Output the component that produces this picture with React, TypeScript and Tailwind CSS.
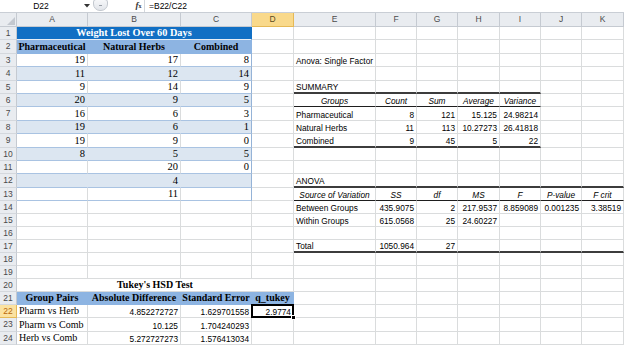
import React from 'react';

type Spec = {
  t?: string;
  a?: 'l' | 'c' | 'r';
  f?: string;
  bg?: string;
  rc?: string;
  bc?: string;
  bw?: string;
  sel?: boolean;
};

type Placed = { w: string; s: Spec };

const COLS = ['A', 'B', 'C', 'D', 'E', 'F', 'G', 'H', 'I', 'J', 'K'];
const W = ['w-[71px]', 'w-[93px]', 'w-[71px]', 'w-[42px]', 'w-[82px]', 'w-[41px]', 'w-[41px]', 'w-[42px]', 'w-[41px]', 'w-[41px]', 'w-[42px]'];
const RH = [
  'h-[13px]', 'h-[14px]', 'h-[13px]', 'h-[14px]', 'h-[13px]', 'h-[13px]', 'h-[14px]', 'h-[13px]', 'h-[14px]', 'h-[13px]', 'h-[13px]', 'h-[14px]', 'h-[13px]',
  'h-[13px]', 'h-[13px]', 'h-[13px]', 'h-[13px]', 'h-[13px]', 'h-[13px]', 'h-[13px]', 'h-[13px]', 'h-[13px]', 'h-[14px]', 'h-[13px]',
];

const serifN = "font-['Liberation_Serif',serif] text-[10.5px] text-black";
const serif = "font-['Liberation_Serif',serif] text-[10px] text-black";
const serifB = "font-['Liberation_Serif',serif] text-[10px] font-bold text-black";
const serifBW = "font-['Liberation_Serif',serif] text-[10.3px] font-bold text-white";
const sans = "font-['Liberation_Sans',Arial,sans-serif] text-[8.3px] text-black";
const sansI = "font-['Liberation_Sans',Arial,sans-serif] text-[8.3px] italic text-black";

const leftData: Record<number, string[]> = {
  3: ['19', '17', '8'],
  4: ['11', '12', '14'],
  5: ['9', '14', '9'],
  6: ['20', '9', '5'],
  7: ['16', '6', '3'],
  8: ['19', '6', '1'],
  9: ['19', '9', '0'],
  10: ['8', '5', '5'],
  11: ['', '20', '0'],
  12: ['', '4', ''],
  13: ['', '11', ''],
};

const rightData: Record<number, string[]> = {
  3: ['Anova: Single Factor'],
  5: ['SUMMARY'],
  6: ['Groups', 'Count', 'Sum', 'Average', 'Variance'],
  7: ['Pharmaceutical', '8', '121', '15.125', '24.98214'],
  8: ['Natural Herbs', '11', '113', '10.27273', '26.41818'],
  9: ['Combined', '9', '45', '5', '22'],
  12: ['ANOVA'],
  13: ['Source of Variation', 'SS', 'df', 'MS', 'F', 'P-value', 'F crit'],
  14: ['Between Groups', '435.9075', '2', '217.9537', '8.859089', '0.001235', '3.38519'],
  15: ['Within Groups', '615.0568', '25', '24.60227'],
  17: ['Total', '1050.964', '27'],
};

const tukey: Record<number, string[]> = {
  22: ['Pharm vs Herb', '4.852272727', '1.629701558', '2.9774'],
  23: ['Pharm vs Comb', '10.125', '1.704240293', ''],
  24: ['Herb vs Comb', '5.272727273', '1.576413034', ''],
};

function buildRow(r: number): Placed[] {
  const out: Placed[] = [];
  if (r === 1) {
    out.push({ w: 'w-[235px]', s: { t: 'Weight Lost Over 60 Days', a: 'c', f: serifBW, bg: 'bg-[#116fc4]', rc: 'border-r-[#116fc4]', bc: 'border-b-[#e8eef6]' } });
    out.push({ w: W[3], s: {} });
  } else if (r === 2) {
    ['Pharmaceutical', 'Natural Herbs', 'Combined'].forEach((t, i) => {
      out.push({ w: W[i], s: { t, a: 'c', f: serifB, bg: 'bg-[#8db4e2]', rc: 'border-r-[#8db4e2]', bc: 'border-b-[#8db4e2]' } });
    });
    out.push({ w: W[3], s: {} });
  } else if (r >= 3 && r <= 13) {
    const band = r % 2 === 0;
    leftData[r].forEach((t, i) => {
      out.push({
        w: W[i],
        s: {
          t,
          a: 'r',
          f: serifN,
          bg: band ? 'bg-[#dce6f1]' : '',
          rc: i === 2 ? 'border-r-[#95b3d7]' : band ? 'border-r-[#dce6f1]' : 'border-r-[#dadcdd]',
          bc: 'border-b-[#a9c3e2]',
        },
      });
    });
    out.push({ w: W[3], s: {} });
  } else if (r === 20) {
    out.push({ w: 'w-[277px]', s: { t: "Tukey's HSD Test", a: 'c', f: serifB } });
  } else if (r === 21) {
    ['Group Pairs', 'Absolute Difference', 'Standard Error', 'q_tukey'].forEach((t, i) => {
      out.push({ w: W[i], s: { t, a: 'c', f: serifB, bg: 'bg-[#8db4e2]', rc: 'border-r-[#8db4e2]', bc: 'border-b-[#8db4e2]' } });
    });
  } else if (r >= 22) {
    const d = tukey[r];
    out.push({ w: W[0], s: { t: d[0], a: 'l', f: serif } });
    out.push({ w: W[1], s: { t: d[1], a: 'r', f: sans } });
    out.push({ w: W[2], s: { t: d[2], a: 'r', f: sans } });
    out.push({ w: W[3], s: { t: d[3], a: 'r', f: sans, sel: r === 22 } });
  } else {
    for (let i = 0; i < 4; i++) out.push({ w: W[i], s: {} });
  }
  const rd = rightData[r] || [];
  for (let i = 4; i < 11; i++) {
    const t = rd[i - 4];
    const header = r === 6 || r === 13;
    const s: Spec = { t, f: header ? sansI : sans, a: header ? 'c' : i === 4 ? 'l' : 'r' };
    const inSummary = i <= 8;
    if ((r === 5 || r === 9) && inSummary) {
      s.bw = 'border-b-2';
      s.bc = 'border-b-[#3c3c3c]';
    }
    if (r === 6 && inSummary) s.bc = 'border-b-[#1e1e1e]';
    if (r === 12 || r === 17) {
      s.bw = 'border-b-2';
      s.bc = 'border-b-[#3c3c3c]';
    }
    if (r === 13) s.bc = 'border-b-[#1e1e1e]';
    out.push({ w: W[i], s });
  }
  return out;
}

function Cell({ w, s }: Placed) {
  const align = s.a === 'r' ? 'justify-end' : s.a === 'c' ? 'justify-center' : 'justify-start';
  return (
    <div
      className={`${s.sel ? 'relative z-10 overflow-visible' : 'overflow-hidden'} shrink-0 h-full flex items-end whitespace-nowrap px-[2px] pb-[1px] leading-none border-r ${s.bw ?? 'border-b'} ${s.rc ?? 'border-r-[#dadcdd]'} ${s.bc ?? 'border-b-[#dadcdd]'} ${s.bg ?? ''} ${w} ${align} ${s.f ?? ''}`}
    >
      {s.t}
      {s.sel && (
        <div className="absolute left-[-1px] top-[-1px] right-[-1px] bottom-[-1px] border-2 border-black pointer-events-none">
          <div className="absolute right-[-4px] bottom-[-4px] w-[5px] h-[5px] bg-black border border-white" />
        </div>
      )}
    </div>
  );
}

export default function App() {
  const rows = Array.from({ length: 24 }, (_, i) => i + 1);
  return (
    <div className="w-[624px] h-[345px] overflow-hidden bg-white flex flex-col">
      <div className="h-[13px] shrink-0 flex items-center border-b border-b-[#c9ced5] bg-white font-['Liberation_Sans',Arial,sans-serif] text-[8.5px] text-black">
        <div className="w-[82px] h-full flex items-center justify-center">D22</div>
        <div className="w-[10px] h-full flex items-center justify-center">
          <svg width="6" height="4" viewBox="0 0 6 4">
            <polygon points="0,0 6,0 3,3.5" fill="#333" />
          </svg>
        </div>
        <div className="w-[1px]" />
        <div className="w-[15px] h-[12px] -mt-[2px] rounded-b-[7px] rounded-t-[3px] border border-[#c3c8cf] bg-gradient-to-b from-[#f6f7f9] to-[#e2e5ea] flex items-center justify-center">
          <div className="w-[3px] h-[1px] bg-[#9aa0a8]" />
        </div>
        <div className="w-[25px]" />
        <div className="w-[11px] h-full flex items-center justify-center font-['Liberation_Serif',serif] italic font-bold text-[9px] text-[#333]">
          f<span className="text-[6px] not-italic">x</span>
        </div>
        <div className="w-[1px] h-full bg-[#d3d7dc]" />
        <div className="pl-[4px] h-full flex items-center">=B22/C22</div>
      </div>
      <div className="h-[14px] shrink-0 flex font-['Liberation_Sans',Arial,sans-serif] text-[8.5px]">
        <div className="w-[17px] shrink-0 h-full bg-[#e9ecf0] border-r border-b border-r-[#c5cad1] border-b-[#c5cad1] flex items-end justify-end p-[1px]">
          <svg width="8" height="8" viewBox="0 0 8 8">
            <polygon points="8,0 8,8 0,8" fill="#c3c8cf" />
          </svg>
        </div>
        {COLS.map((c, i) => (
          <div
            key={c}
            className={`${W[i]} shrink-0 h-full flex items-center justify-center border-r border-b ${
              c === 'D'
                ? 'bg-[#f9d98b] border-r-[#e5b956] border-b-[#e5b956] text-[#5a4a20]'
                : 'bg-[#e9ecf0] border-r-[#c5cad1] border-b-[#c5cad1] text-[#4a4a4a]'
            }`}
          >
            {c}
          </div>
        ))}
      </div>
      {rows.map((r) => (
        <div key={r} className={`${RH[r - 1]} shrink-0 flex`}>
          <div
            className={`w-[17px] shrink-0 h-full flex items-center justify-center border-r border-b font-['Liberation_Sans',Arial,sans-serif] text-[8.5px] ${
              r === 22
                ? 'bg-[#fbe2a0] border-r-[#e5b956] border-b-[#e5b956] text-[#b8690a]'
                : 'bg-[#e9ecf0] border-r-[#c5cad1] border-b-[#d4d8dd] text-[#4a4a4a]'
            }`}
          >
            {r}
          </div>
          {buildRow(r).map((p, i) => (
            <Cell key={i} w={p.w} s={p.s} />
          ))}
        </div>
      ))}
    </div>
  );
}
